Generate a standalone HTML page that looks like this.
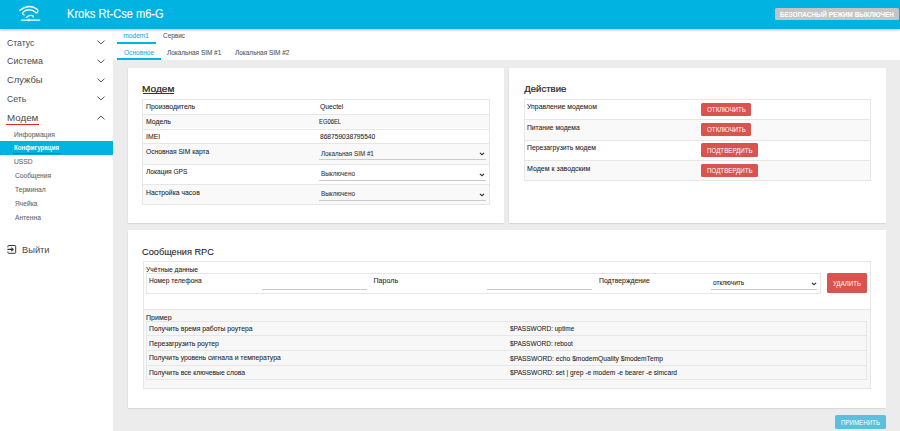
<!DOCTYPE html>
<html><head><meta charset="utf-8">
<style>
*{box-sizing:border-box;margin:0;padding:0}
html,body{width:900px;height:431px;overflow:hidden;background:#fff;font-family:"Liberation Sans",sans-serif;color:#333}
.a{position:absolute;white-space:nowrap;line-height:0}
</style></head><body>
<div class="a" style="left:0.00px;top:0.00px;width:900.00px;height:28.50px;background:#00b3e0;z-index:2;box-shadow:0 0.5px 2.5px rgba(0,0,0,.28)"></div>
<svg class="a" style="left:15px;top:2px;z-index:3" width="30" height="24" viewBox="0 0 30 24">
<g fill="none" stroke="#fff" stroke-width="1.3" stroke-linecap="round" stroke-linejoin="round">
<path d="M4.9 8.3 Q14 1.3 22.3 7.3 Q23.9 9.6 21.6 10.9 Q14.5 5 8.2 10 Q6.7 12.2 9.2 13"/>
<path d="M11.3 15.4 Q14.5 12.5 17.6 13.6 Q18.6 14.3 18.2 15"/>
<path d="M6.4 18.1 H24.8"/>
</g><circle cx="13.9" cy="18.1" r="1.4" fill="#fff"/></svg>
<div style="position:absolute;left:0;top:0;z-index:3">
<div class="a" style="left:66.81px;top:13.93px;font-size:12.03px;color:#fff;transform:scaleX(0.922);transform-origin:0 0;-webkit-text-stroke:0.10px">Kroks Rt-Cse m6-G</div>
<div class="a" style="left:774.80px;top:8.10px;width:124.20px;height:11.80px;background:#c4c4c4;border-radius:1.5px"></div>
<div class="a" style="left:780.08px;top:14.79px;font-size:7.25px;color:#fff;font-weight:bold;transform:scaleX(0.882);transform-origin:0 0">БЕЗОПАСНЫЙ РЕЖИМ ВЫКЛЮЧЕН</div>
</div>
<div class="a" style="left:6.57px;top:42.89px;font-size:9.28px;color:#4a4a4a;transform:scaleX(0.933);transform-origin:0 0">Статус</div>
<div class="a" style="left:6.55px;top:61.39px;font-size:9.28px;color:#4a4a4a;transform:scaleX(0.963);transform-origin:0 0">Система</div>
<div class="a" style="left:6.53px;top:80.19px;font-size:9.28px;color:#4a4a4a;transform:scaleX(1.011);transform-origin:0 0">Службы</div>
<div class="a" style="left:6.57px;top:98.99px;font-size:9.28px;color:#4a4a4a;transform:scaleX(0.933);transform-origin:0 0">Сеть</div>
<div class="a" style="left:6.92px;top:118.39px;font-size:9.28px;color:#4a4a4a;transform:scaleX(1.053);transform-origin:0 0">Модем</div>
<div class="a" style="left:5.60px;top:123.70px;width:33.70px;height:1.20px;background:#e3262b"></div>
<svg class="a" style="left:97px;top:39.80px" width="8" height="5" viewBox="0 0 8 5"><path d="M0.5 0.7 L4 3.9 L7.5 0.7" fill="none" stroke="#555" stroke-width="1"/></svg>
<svg class="a" style="left:97px;top:58.80px" width="8" height="5" viewBox="0 0 8 5"><path d="M0.5 0.7 L4 3.9 L7.5 0.7" fill="none" stroke="#555" stroke-width="1"/></svg>
<svg class="a" style="left:97px;top:77.60px" width="8" height="5" viewBox="0 0 8 5"><path d="M0.5 0.7 L4 3.9 L7.5 0.7" fill="none" stroke="#555" stroke-width="1"/></svg>
<svg class="a" style="left:97px;top:96.40px" width="8" height="5" viewBox="0 0 8 5"><path d="M0.5 0.7 L4 3.9 L7.5 0.7" fill="none" stroke="#555" stroke-width="1"/></svg>
<svg class="a" style="left:97px;top:115.2px" width="8" height="5" viewBox="0 0 8 5"><path d="M0.5 4.3 L4 1.1 L7.5 4.3" fill="none" stroke="#555" stroke-width="1"/></svg>
<div class="a" style="left:14.37px;top:134.54px;font-size:7.10px;color:#666;transform:scaleX(0.938);transform-origin:0 0;-webkit-text-stroke:0.08px">Информация</div>
<div class="a" style="left:0.00px;top:140.90px;width:113.00px;height:13.90px;background:#00b3e0"></div>
<div class="a" style="left:14.20px;top:148.39px;font-size:7.25px;color:#fff;font-weight:bold;transform:scaleX(0.857);transform-origin:0 0">Конфигурация</div>
<div class="a" style="left:12.50px;top:153.00px;width:48.10px;height:1.20px;background:#e3262b"></div>
<div class="a" style="left:14.40px;top:162.34px;font-size:7.10px;color:#666;transform:scaleX(0.938);transform-origin:0 0;-webkit-text-stroke:0.08px">USSD</div>
<div class="a" style="left:14.57px;top:176.44px;font-size:7.10px;color:#666;transform:scaleX(0.938);transform-origin:0 0;-webkit-text-stroke:0.08px">Сообщения</div>
<div class="a" style="left:14.77px;top:190.34px;font-size:7.10px;color:#666;transform:scaleX(0.938);transform-origin:0 0;-webkit-text-stroke:0.08px">Терминал</div>
<div class="a" style="left:14.57px;top:204.24px;font-size:7.10px;color:#666;transform:scaleX(0.938);transform-origin:0 0;-webkit-text-stroke:0.08px">Ячейка</div>
<div class="a" style="left:14.90px;top:218.14px;font-size:7.10px;color:#666;transform:scaleX(0.938);transform-origin:0 0;-webkit-text-stroke:0.08px">Антенна</div>
<svg class="a" style="left:7px;top:245px" width="9.5" height="9" viewBox="0 0 9.5 9">
<path d="M0.9 2.3 V1.3 Q0.9 0.5 1.7 0.5 H7.9 Q8.7 0.5 8.7 1.3 V7.5 Q8.7 8.3 7.9 8.3 H1.7 Q0.9 8.3 0.9 7.5 V6.5" fill="none" stroke="#333" stroke-width="1"/>
<path d="M0.4 4.4 H6.1 M4.3 2.6 L6.2 4.4 L4.3 6.2" fill="none" stroke="#333" stroke-width="1.1"/></svg>
<div class="a" style="left:22.05px;top:250.09px;font-size:9.28px;color:#4a4a4a;transform:scaleX(1.005);transform-origin:0 0">Выйти</div>
<div class="a" style="left:123.27px;top:36.20px;font-size:6.64px;color:#1ab0de;-webkit-text-stroke:0.08px">modem1</div>
<div class="a" style="left:116.50px;top:42.00px;width:39.50px;height:1.50px;background:#00b3e0"></div>
<div class="a" style="left:162.58px;top:36.19px;font-size:6.67px;color:#555;transform:scaleX(0.963);transform-origin:0 0;-webkit-text-stroke:0.08px">Сервис</div>
<div class="a" style="left:123.50px;top:52.84px;font-size:7.10px;color:#1ab0de;transform:scaleX(0.925);transform-origin:0 0;-webkit-text-stroke:0.08px">Основное</div>
<div class="a" style="left:116.50px;top:58.30px;width:44.00px;height:1.50px;background:#00b3e0"></div>
<div class="a" style="left:166.94px;top:52.84px;font-size:7.10px;color:#555;transform:scaleX(0.908);transform-origin:0 0;-webkit-text-stroke:0.08px">Локальная SIM #1</div>
<div class="a" style="left:234.84px;top:52.84px;font-size:7.10px;color:#555;transform:scaleX(0.909);transform-origin:0 0;-webkit-text-stroke:0.08px">Локальная SIM #2</div>
<div class="a" style="left:113.00px;top:60.00px;width:787.00px;height:371.00px;background:#ececec"></div>
<div class="a" style="left:127.70px;top:67.50px;width:376.60px;height:155.50px;background:#fff;box-shadow:0.3px 0.6px 1.5px rgba(0,0,0,.25)"></div>
<div class="a" style="left:508.80px;top:67.50px;width:377.00px;height:155.50px;background:#fff;box-shadow:0.3px 0.6px 1.5px rgba(0,0,0,.25)"></div>
<div class="a" style="left:127.50px;top:230.40px;width:758.50px;height:177.60px;background:#fff;box-shadow:0.3px 0.6px 1.5px rgba(0,0,0,.25)"></div>
<div class="a" style="left:142.39px;top:89.49px;font-size:9.28px;color:#222;transform:scaleX(1.089);transform-origin:0 0;-webkit-text-stroke:0.20px">Модем</div>
<div class="a" style="left:143.20px;top:92.70px;width:30.90px;height:0.70px;background:#333"></div>
<div class="a" style="left:142.30px;top:99.20px;width:347.20px;height:14.70px;background:#fff"></div>
<div class="a" style="left:142.30px;top:113.90px;width:347.20px;height:14.60px;background:#f9f9f9"></div>
<div class="a" style="left:142.30px;top:128.50px;width:347.20px;height:14.60px;background:#fff"></div>
<div class="a" style="left:142.30px;top:143.10px;width:347.20px;height:21.00px;background:#f9f9f9"></div>
<div class="a" style="left:142.30px;top:164.10px;width:347.20px;height:20.10px;background:#fff"></div>
<div class="a" style="left:142.30px;top:184.20px;width:347.20px;height:20.00px;background:#f9f9f9"></div>
<div class="a" style="left:142.3px;top:99.2px;width:347.7px;height:105.5px;border:1px solid #e6e6e6"></div>
<div class="a" style="left:142.30px;top:113.90px;width:347.20px;height:1.00px;background:#e6e6e6"></div>
<div class="a" style="left:142.30px;top:128.50px;width:347.20px;height:1.00px;background:#e6e6e6"></div>
<div class="a" style="left:142.30px;top:143.10px;width:347.20px;height:1.00px;background:#e6e6e6"></div>
<div class="a" style="left:142.30px;top:164.10px;width:347.20px;height:1.00px;background:#e6e6e6"></div>
<div class="a" style="left:142.30px;top:184.20px;width:347.20px;height:1.00px;background:#e6e6e6"></div>
<div class="a" style="left:145.95px;top:107.24px;font-size:7.10px;color:#222;transform:scaleX(0.974);transform-origin:0 0;-webkit-text-stroke:0.06px">Производитель</div>
<div class="a" style="left:145.95px;top:122.24px;font-size:7.10px;color:#222;transform:scaleX(0.974);transform-origin:0 0;-webkit-text-stroke:0.06px">Модель</div>
<div class="a" style="left:145.88px;top:136.84px;font-size:7.10px;color:#222;transform:scaleX(0.974);transform-origin:0 0;-webkit-text-stroke:0.06px">IMEI</div>
<div class="a" style="left:145.90px;top:151.84px;font-size:7.39px;color:#222;transform:scaleX(0.907);transform-origin:0 0;-webkit-text-stroke:0.06px">Основная SIM карта</div>
<div class="a" style="left:146.13px;top:171.84px;font-size:7.39px;color:#222;transform:scaleX(0.892);transform-origin:0 0;-webkit-text-stroke:0.06px">Локация GPS</div>
<div class="a" style="left:145.65px;top:192.54px;font-size:7.39px;color:#222;transform:scaleX(0.926);transform-origin:0 0;-webkit-text-stroke:0.06px">Настройка часов</div>
<div class="a" style="left:319.50px;top:136.94px;font-size:7.10px;color:#222;transform:scaleX(0.933);transform-origin:0 0;-webkit-text-stroke:0.06px">868759038795540</div>
<div class="a" style="left:319.50px;top:106.94px;font-size:7.10px;color:#222;transform:scaleX(0.954);transform-origin:0 0;-webkit-text-stroke:0.06px">Quectel</div>
<div class="a" style="left:319.33px;top:121.94px;font-size:7.10px;color:#222;transform:scaleX(0.825);transform-origin:0 0;-webkit-text-stroke:0.06px">EG06EL</div>
<div class="a" style="left:321.24px;top:153.59px;font-size:6.96px;color:#333;transform:scaleX(0.902);transform-origin:0 0;-webkit-text-stroke:0.06px">Локальная SIM #1</div>
<div class="a" style="left:321.09px;top:173.79px;font-size:6.96px;color:#333;transform:scaleX(0.916);transform-origin:0 0;-webkit-text-stroke:0.06px">Выключено</div>
<div class="a" style="left:321.09px;top:193.89px;font-size:6.96px;color:#333;transform:scaleX(0.916);transform-origin:0 0;-webkit-text-stroke:0.06px">Выключено</div>
<div class="a" style="left:319.40px;top:158.85px;width:166.60px;height:1.50px;background:#cacaca"></div>
<svg class="a" style="left:479.30px;top:152.20px" width="6" height="4" viewBox="0 0 6 4"><path d="M0.9 0.9 L3 2.7 L5.1 0.9" fill="none" stroke="#333" stroke-width="1.2"/></svg>
<div class="a" style="left:319.40px;top:179.55px;width:166.60px;height:1.50px;background:#cacaca"></div>
<svg class="a" style="left:479.30px;top:172.60px" width="6" height="4" viewBox="0 0 6 4"><path d="M0.9 0.9 L3 2.7 L5.1 0.9" fill="none" stroke="#333" stroke-width="1.2"/></svg>
<div class="a" style="left:319.40px;top:199.55px;width:166.60px;height:1.50px;background:#cacaca"></div>
<svg class="a" style="left:479.30px;top:192.60px" width="6" height="4" viewBox="0 0 6 4"><path d="M0.9 0.9 L3 2.7 L5.1 0.9" fill="none" stroke="#333" stroke-width="1.2"/></svg>
<div class="a" style="left:524.25px;top:89.39px;font-size:9.57px;color:#222;-webkit-text-stroke:0.20px">Действие</div>
<div class="a" style="left:524.00px;top:98.90px;width:347.00px;height:20.50px;background:#fff"></div>
<div class="a" style="left:524.00px;top:119.40px;width:347.00px;height:20.40px;background:#f9f9f9"></div>
<div class="a" style="left:524.00px;top:139.80px;width:347.00px;height:20.40px;background:#fff"></div>
<div class="a" style="left:524.00px;top:160.20px;width:347.00px;height:20.40px;background:#f9f9f9"></div>
<div class="a" style="left:524px;top:98.9px;width:347px;height:81.7px;border:1px solid #e6e6e6"></div>
<div class="a" style="left:524.00px;top:119.40px;width:347.00px;height:1.00px;background:#e6e6e6"></div>
<div class="a" style="left:524.00px;top:139.80px;width:347.00px;height:1.00px;background:#e6e6e6"></div>
<div class="a" style="left:524.00px;top:160.20px;width:347.00px;height:1.00px;background:#e6e6e6"></div>
<div class="a" style="left:527.29px;top:107.29px;font-size:6.96px;color:#222;transform:scaleX(0.993);transform-origin:0 0;-webkit-text-stroke:0.06px">Управление модемом</div>
<div class="a" style="left:527.26px;top:128.19px;font-size:6.96px;color:#222;transform:scaleX(0.968);transform-origin:0 0;-webkit-text-stroke:0.06px">Питание модема</div>
<div class="a" style="left:527.25px;top:148.39px;font-size:6.96px;color:#222;transform:scaleX(0.981);transform-origin:0 0;-webkit-text-stroke:0.06px">Перезагрузить модем</div>
<div class="a" style="left:527.24px;top:168.79px;font-size:6.96px;color:#222;transform:scaleX(1.008);transform-origin:0 0;-webkit-text-stroke:0.06px">Модем к заводским</div>
<div class="a" style="left:701.00px;top:102.50px;width:50.10px;height:13.30px;background:#d9534f;border-radius:1.5px"></div>
<div class="a" style="left:706.72px;top:109.79px;font-size:7.25px;color:#fff;transform:scaleX(0.858);transform-origin:0 0">ОТКЛЮЧИТЬ</div>
<div class="a" style="left:701.00px;top:123.00px;width:50.10px;height:13.30px;background:#d9534f;border-radius:1.5px"></div>
<div class="a" style="left:706.72px;top:130.29px;font-size:7.25px;color:#fff;transform:scaleX(0.858);transform-origin:0 0">ОТКЛЮЧИТЬ</div>
<div class="a" style="left:701.00px;top:143.30px;width:56.70px;height:13.30px;background:#d9534f;border-radius:1.5px"></div>
<div class="a" style="left:706.50px;top:150.59px;font-size:7.25px;color:#fff;transform:scaleX(0.855);transform-origin:0 0">ПОДТВЕРДИТЬ</div>
<div class="a" style="left:701.00px;top:163.80px;width:56.70px;height:13.30px;background:#d9534f;border-radius:1.5px"></div>
<div class="a" style="left:706.50px;top:171.09px;font-size:7.25px;color:#fff;transform:scaleX(0.855);transform-origin:0 0">ПОДТВЕРДИТЬ</div>
<div class="a" style="left:142.44px;top:252.29px;font-size:9.57px;color:#222;transform:scaleX(0.962);transform-origin:0 0;-webkit-text-stroke:0.08px">Сообщения RPC</div>
<div class="a" style="left:142.5px;top:261.2px;width:728.3px;height:128.1px;border:1px solid #e6e6e6"></div>
<div class="a" style="left:143.50px;top:309.40px;width:726.30px;height:78.90px;background:#f7f7f7"></div>
<div class="a" style="left:143.50px;top:309.40px;width:726.30px;height:1.00px;background:#e6e6e6"></div>
<div class="a" style="left:146.20px;top:269.74px;font-size:7.10px;color:#222;transform:scaleX(0.941);transform-origin:0 0;-webkit-text-stroke:0.06px">Учётные данные</div>
<div class="a" style="left:145.8px;top:273.4px;width:675.2px;height:20.5px;border:1px solid #e6e6e6"></div>
<div class="a" style="left:149.37px;top:280.94px;font-size:7.10px;color:#222;transform:scaleX(0.934);transform-origin:0 0;-webkit-text-stroke:0.06px">Номер телефона</div>
<div class="a" style="left:373.53px;top:281.14px;font-size:7.10px;color:#222;-webkit-text-stroke:0.06px">Пароль</div>
<div class="a" style="left:598.75px;top:281.14px;font-size:7.10px;color:#222;transform:scaleX(0.966);transform-origin:0 0;-webkit-text-stroke:0.06px">Подтверждение</div>
<div class="a" style="left:262.10px;top:288.60px;width:105.40px;height:1.10px;background:#c8c8c8"></div>
<div class="a" style="left:486.70px;top:288.60px;width:105.80px;height:1.10px;background:#c8c8c8"></div>
<div class="a" style="left:711.00px;top:288.60px;width:106.00px;height:1.40px;background:#cacaca"></div>
<div class="a" style="left:712.74px;top:283.19px;font-size:6.67px;color:#222;transform:scaleX(0.970);transform-origin:0 0;-webkit-text-stroke:0.06px">отключить</div>
<svg class="a" style="left:810.50px;top:281.80px" width="6" height="4" viewBox="0 0 6 4"><path d="M0.9 0.9 L3 2.7 L5.1 0.9" fill="none" stroke="#333" stroke-width="1.2"/></svg>
<div class="a" style="left:827.00px;top:273.40px;width:40.40px;height:20.00px;background:#d9534f;border-radius:1.5px"></div>
<div class="a" style="left:833.42px;top:284.24px;font-size:7.68px;color:#fff;transform:scaleX(0.790);transform-origin:0 0">УДАЛИТЬ</div>
<div class="a" style="left:146.04px;top:317.64px;font-size:7.10px;color:#222;transform:scaleX(0.991);transform-origin:0 0;-webkit-text-stroke:0.06px">Пример</div>
<div class="a" style="left:146px;top:321.1px;width:721.3px;height:59px;border:1px solid #e6e6e6"></div>
<div class="a" style="left:146.00px;top:335.30px;width:721.30px;height:1.00px;background:#e6e6e6"></div>
<div class="a" style="left:146.00px;top:350.40px;width:721.30px;height:1.00px;background:#e6e6e6"></div>
<div class="a" style="left:146.00px;top:365.40px;width:721.30px;height:1.00px;background:#e6e6e6"></div>
<div class="a" style="left:149.06px;top:328.54px;font-size:7.10px;color:#222;transform:scaleX(0.959);transform-origin:0 0;-webkit-text-stroke:0.06px">Получить время работы роутера</div>
<div class="a" style="left:149.05px;top:343.74px;font-size:7.10px;color:#222;transform:scaleX(0.962);transform-origin:0 0;-webkit-text-stroke:0.06px">Перезагрузить роутер</div>
<div class="a" style="left:149.06px;top:358.44px;font-size:7.10px;color:#222;transform:scaleX(0.955);transform-origin:0 0;-webkit-text-stroke:0.06px">Получить уровень сигнала и температура</div>
<div class="a" style="left:149.06px;top:373.24px;font-size:7.10px;color:#222;transform:scaleX(0.955);transform-origin:0 0;-webkit-text-stroke:0.06px">Получить все ключевые слова</div>
<div class="a" style="left:510.03px;top:373.44px;font-size:7.10px;color:#222;transform:scaleX(0.939);transform-origin:0 0;-webkit-text-stroke:0.06px">$PASSWORD: set | grep -e modem -e bearer -e simcard</div>
<div class="a" style="left:510.03px;top:328.94px;font-size:7.10px;color:#222;transform:scaleX(0.918);transform-origin:0 0;-webkit-text-stroke:0.06px">$PASSWORD: uptime</div>
<div class="a" style="left:510.04px;top:343.94px;font-size:7.10px;color:#222;transform:scaleX(0.913);transform-origin:0 0;-webkit-text-stroke:0.06px">$PASSWORD: reboot</div>
<div class="a" style="left:510.03px;top:358.64px;font-size:7.10px;color:#222;transform:scaleX(0.940);transform-origin:0 0;-webkit-text-stroke:0.06px">$PASSWORD: echo $modemQuality $modemTemp</div>
<div class="a" style="left:835.00px;top:415.30px;width:50.90px;height:13.30px;background:#5bc0de;border-radius:1.5px"></div>
<div class="a" style="left:840.81px;top:422.79px;font-size:7.25px;color:#fff;transform:scaleX(0.851);transform-origin:0 0">ПРИМЕНИТЬ</div>
</body></html>
